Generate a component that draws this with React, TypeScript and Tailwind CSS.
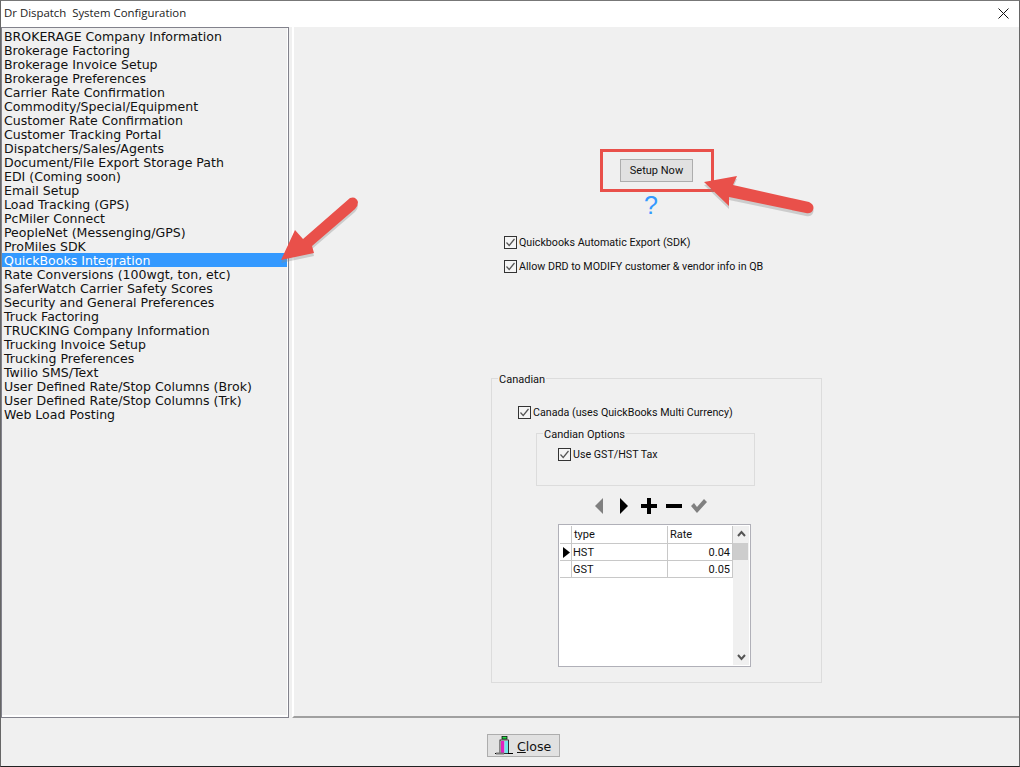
const items = [
  "BROKERAGE Company Information","Brokerage Factoring","Brokerage Invoice Setup","Brokerage Preferences","Carrier Rate Confirmation","Commodity/Special/Equipment","Customer Rate Confirmation","Customer Tracking Portal","Dispatchers/Sales/Agents","Document/File Export Storage Path","EDI (Coming soon)","Email Setup","Load Tracking (GPS)","PcMiler Connect","PeopleNet (Messenging/GPS)","ProMiles SDK","QuickBooks Integration","Rate Conversions (100wgt, ton, etc)","SaferWatch Carrier Safety Scores","Security and General Preferences","Truck Factoring","TRUCKING Company Information","Trucking Invoice Setup","Trucking Preferences","Twilio SMS/Text","User Defined Rate/Stop Columns (Brok)","User Defined Rate/Stop Columns (Trk)","Web Load Posting",
];

function Check({ label, className = "" }: { label: string; className?: string }) {
  return (
    <div className={`flex items-center gap-[2px] h-[14px] text-[10.7px] text-[#111] ${className}`}>
      <span className="w-[13px] h-[13px] border border-[#333] bg-[#f4f4f4] flex items-center justify-center shrink-0">
        <svg width="11" height="11" viewBox="0 0 11 11" fill="none" stroke="#555" strokeWidth="1.2"><path d="M1.5 5.5 L4.2 8.5 L9.5 2" /></svg>
      </span>
      <span className="whitespace-nowrap pt-[2px]">{label}</span>
    </div>
  );
}

function Row({ type, rate, active }: { type: string; rate: string; active?: boolean }) {
  return (
    <div className="flex h-[17px] text-[11px] leading-[18px] text-[#111]">
      <div className="w-[12px] border-b border-r border-[#c8c8c8] flex items-center pl-[3px]">
        {active && <svg width="7" height="11" viewBox="0 0 7 11"><path d="M0 0 L7 5.5 L0 11 Z" fill="#000" /></svg>}
      </div>
      <div className="w-[96px] border-b border-r border-[#c8c8c8] pl-[1px]">{type}</div>
      <div className="w-[65px] border-b border-r border-[#c8c8c8] text-right pr-[2px]">{rate}</div>
    </div>
  );
}

export default function App() {
  return (
    <div className="relative w-[1020px] h-[767px] bg-[#f0f0f0] flex flex-col border-l border-r border-t border-b border-t-[#777] border-l-[#666] border-r-[#666] border-b-[#222] overflow-hidden font-['Roboto','Noto_Sans',sans-serif]">
      <div className="h-[26px] bg-white flex items-center justify-between pl-[3px] pr-[10px] pb-[2px] shrink-0">
        <span className="text-[11.4px] text-[#222] whitespace-pre font-['Open_Sans',sans-serif]">Dr Dispatch  System Configuration</span>
        <svg width="11" height="11" viewBox="0 0 11 11" stroke="#111" strokeWidth="1"><path d="M0.5 0.5 L10.5 10.5 M10.5 0.5 L0.5 10.5" /></svg>
      </div>
      <div className="flex h-[691px] shrink-0">
        <div className="w-[288px] h-[691px] border border-[#82828c] shadow-[inset_-1px_-2px_0_0_#fff] pt-[1px] pr-[1px] font-['DejaVu_Sans',sans-serif] text-[12.55px] leading-[16px] text-[#111] shrink-0">
          {items.map((t) => (
            <div key={t} className={`h-[14px] pl-[2px] whitespace-nowrap ${t === "QuickBooks Integration" ? "bg-[#3399ff] text-white" : ""}`}>{t}</div>
          ))}
        </div>
        <div className="ml-[3px] flex-1 border-l-2 border-white border-b-2 border-b-[#a0a0a0] flex flex-col pl-[197px] pt-[132px]">
          <div className="pl-[129px]">
            <button className="w-[73px] h-[23px] pt-[2px] bg-[#e1e1e1] border border-[#adadad] text-[11px] text-[#111] flex items-center justify-center">Setup Now</button>
          </div>
          <div className="pl-[153px] text-[25px] leading-[30px] h-[30px] mt-[8px] text-[#3399ff] font-['Liberation_Sans',sans-serif]">?</div>
          <Check label="Quickbooks Automatic Export (SDK)" className="ml-[13px] mt-[15px]" />
          <Check label="Allow DRD to MODIFY customer & vendor info in QB" className="ml-[13px] mt-[10px]" />
          <fieldset className="w-[331px] h-[312px] mt-[98px] border border-[#dcdcdc] ml-0">
            <legend className="text-[11px] text-[#111] ml-[6px] px-[1px] h-[14px] leading-[18px]">Canadian</legend>
            <div className="pl-[26px]">
              <Check label="Canada (uses QuickBooks Multi Currency)" className="mt-[20px]" />
              <fieldset className="w-[219px] h-[60px] mt-[7px] ml-[18px] border border-[#dcdcdc]">
                <legend className="text-[11px] text-[#111] ml-[6px] px-[1px] h-[14px] leading-[18px]">Candian Options</legend>
                <Check label="Use GST/HST Tax" className="mt-[7px] ml-[21px]" />
              </fieldset>
              <div className="flex items-center ml-[71px] mt-[10px] h-[20px] gap-[5px]">
                <svg width="20" height="20" viewBox="0 0 20 20"><path d="M14 2 L14 18 L6 10 Z" fill="#808080" /></svg>
                <svg width="20" height="20" viewBox="0 0 20 20"><path d="M6 2 L6 18 L14 10 Z" fill="#000" /></svg>
                <svg width="20" height="20" viewBox="0 0 20 20"><path d="M8 2 H12 V8 H18 V12 H12 V18 H8 V12 H2 V8 H8 Z" fill="#000" /></svg>
                <svg width="20" height="20" viewBox="0 0 20 20"><path d="M2 8 H18 V12 H2 Z" fill="#000" /></svg>
                <svg width="20" height="20" viewBox="0 0 20 20"><path d="M2 10 L5 7 L8 11 L15 3 L18 6 L8 17 Z" fill="#808080" /></svg>
              </div>
              <div className="w-[193px] h-[143px] ml-[40px] mt-[8px] bg-white border border-[#b0b0b8] p-[1px] flex">
                <div className="w-[173px]">
                  <div className="flex h-[18px] text-[11px] leading-[18px] text-[#111]">
                    <div className="w-[12px] border-b border-r border-[#c8c8c8]" />
                    <div className="w-[96px] border-b border-r border-[#c8c8c8] pl-[2px]">type</div>
                    <div className="w-[65px] border-b border-r border-[#c8c8c8] pl-[2px]">Rate</div>
                  </div>
                  <Row type="HST" rate="0.04" active />
                  <Row type="GST" rate="0.05" />
                </div>
                <div className="w-[16px] bg-[#f0f0f0] flex flex-col items-center justify-between py-[4px] relative">
                  <svg width="9" height="7" viewBox="0 0 9 7" fill="none" stroke="#555" strokeWidth="2"><path d="M1 6 L4.5 2 L8 6" /></svg>
                  <div className="absolute left-0 top-[17px] w-[15px] h-[17px] bg-[#cdcdcd]" />
                  <svg width="9" height="7" viewBox="0 0 9 7" fill="none" stroke="#555" strokeWidth="2"><path d="M1 1 L4.5 5 L8 1" /></svg>
                </div>
              </div>
            </div>
          </fieldset>
        </div>
      </div>
      <div className="flex-1 flex justify-center items-start pt-[16px] pr-[1px]">
        <button className="ml-[28px] w-[73px] h-[23px] bg-[#e1e1e1] border border-[#adadad] flex items-center pl-[7px] gap-[3px] font-['DejaVu_Sans',sans-serif] text-[12.6px] text-[#111]">
          <svg width="19" height="19" viewBox="0 0 19 19" className="shrink-0">
            <rect x="7" y="0.5" width="5" height="2.5" fill="#22dd44" stroke="#000" strokeWidth="0.7" />
            <rect x="5" y="4" width="8.5" height="13.5" fill="#fff" stroke="#000" strokeWidth="0.8" />
            <rect x="6" y="5" width="3.5" height="12" fill="#e020c0" />
            <rect x="9.5" y="5" width="3.5" height="12" fill="#70e8e8" />
            <path d="M0 17.5 H5 M13 17.5 H18" stroke="#000" strokeWidth="1" />
            <rect x="1" y="16.5" width="8" height="2" fill="#777" />
          </svg>
          <span className="pt-[4px]"><span className="underline">C</span>lose</span>
        </button>
      </div>

      <div className="absolute left-[599px] top-[148px] w-[114px] h-[43px] border-[3px] border-[#e9504a]" />
      <svg className="absolute left-0 top-0 pointer-events-none" width="1020" height="767" viewBox="0 0 1020 767">
        <g fill="#8a8a8a" opacity="0.35" transform="translate(-1 0)">
          <path d="M281 260 L295 230 L303 239 L350 198 Q356 196 358 202 Q358 206 355 209 L312 246 L314 253 Z" transform="translate(0 2)" />
          <path d="M704 182 L737 176 L733 185 L809 202 Q815 205 813 210 Q811 214 806 213 L729 197 L729 206 Z" transform="translate(0 2)" />
        </g>
        <g fill="#e9504a" transform="translate(-1 -1)">
          <path d="M281 260 L295 230 L303 239 L350 198 Q356 196 358 202 Q358 206 355 209 L312 246 L314 253 Z" />
          <path d="M704 182 L737 176 L733 185 L809 202 Q815 205 813 210 Q811 214 806 213 L729 197 L729 206 Z" />
        </g>
      </svg>
    </div>
  );
}
